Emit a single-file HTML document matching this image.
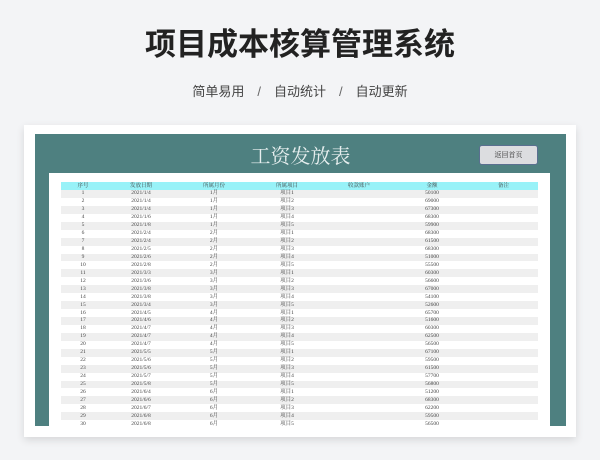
<!DOCTYPE html>
<html><head><meta charset="utf-8"><style>
*{margin:0;padding:0;box-sizing:border-box}
body{width:600px;height:460px;background:#f3f4f6;position:relative;overflow:hidden;font-family:"Liberation Sans","Noto Sans CJK SC",sans-serif}
.t{position:absolute;top:26px;left:0;width:600px;text-align:center;font-size:31px;font-weight:bold;color:#222;line-height:38px}
.s{position:absolute;top:83px;left:0;width:600px;text-align:center;font-size:13px;color:#444;line-height:18px}
.s span{display:inline-block;margin:0 13px;color:#666}
.card{position:absolute;left:24px;top:125px;width:552px;height:312px;background:#fff;box-shadow:0 3px 8px rgba(0,0,0,.12)}
.teal{position:absolute;left:35px;top:134px;width:531px;height:292px;background:#4e8080}
.h{position:absolute;left:35px;top:144px;width:531px;text-align:center;color:#e6eeee;font-size:20px;line-height:26px;font-family:"Liberation Serif","Noto Serif CJK SC",serif}
.btn{position:absolute;left:479px;top:145px;width:59px;height:20px;background:#dcdde0;border:1px solid #5a6f90;border-radius:3px;font-size:7px;color:#333;text-align:center;line-height:18px;font-family:"Liberation Serif","Noto Serif CJK SC",serif}
.in{position:absolute;left:49px;top:173px;width:501px;height:253px;background:#fff;overflow:hidden}
table{position:absolute;left:12px;top:9px;width:477px;border-collapse:collapse;font-family:"Liberation Serif","Noto Serif CJK SC",serif;font-size:5.5px;color:#444}
td{height:7.95px;text-align:center;line-height:7px;padding:0;white-space:nowrap}
tr.hd td{background:#98f2f8;height:8px}
tr:nth-child(odd):not(.hd) td{background:#efefef}
</style></head><body>
<div class="t">项目成本核算管理系统</div>
<div class="s">简单易用<span>/</span>自动统计<span>/</span>自动更新</div>
<div class="card"></div>
<div class="teal"></div>
<div class="h">工资发放表</div>
<div class="btn">返回首页</div>
<div class="in"><table id="tb">
<colgroup><col style="width:44px"><col style="width:72px"><col style="width:74px"><col style="width:72px"><col style="width:72px"><col style="width:74px"><col style="width:69px"></colgroup>
<tr class="hd"><td>序号</td><td>发放日期</td><td>所属月份</td><td>所属项目</td><td>收款账户</td><td>金额</td><td>备注</td></tr>
</table></div>
<script>
var d=["1/4","1/4","1/4","1/6","1/8","2/4","2/4","2/5","2/6","2/8","3/3","3/6","3/8","3/8","3/4","4/5","4/6","4/7","4/7","4/7","5/5","5/6","5/6","5/7","5/8","6/4","6/6","6/7","6/8","6/8"];
var a=[50100,69000,67300,68300,59900,68300,61500,68300,51000,55500,60300,56600,67000,54100,52600,65700,51600,60300,62500,56500,67100,59500,61500,57700,56800,51200,68300,62200,59500,56500];
var h="";for(var i=0;i<30;i++){h+="<tr><td>"+(i+1)+"</td><td>2021/"+d[i]+"</td><td>"+(Math.floor(i/5)+1)+"月</td><td>项目"+(i%5+1)+"</td><td></td><td>"+a[i]+"</td><td></td></tr>";}
document.getElementById("tb").insertAdjacentHTML("beforeend",h);
</script>
</body></html>
